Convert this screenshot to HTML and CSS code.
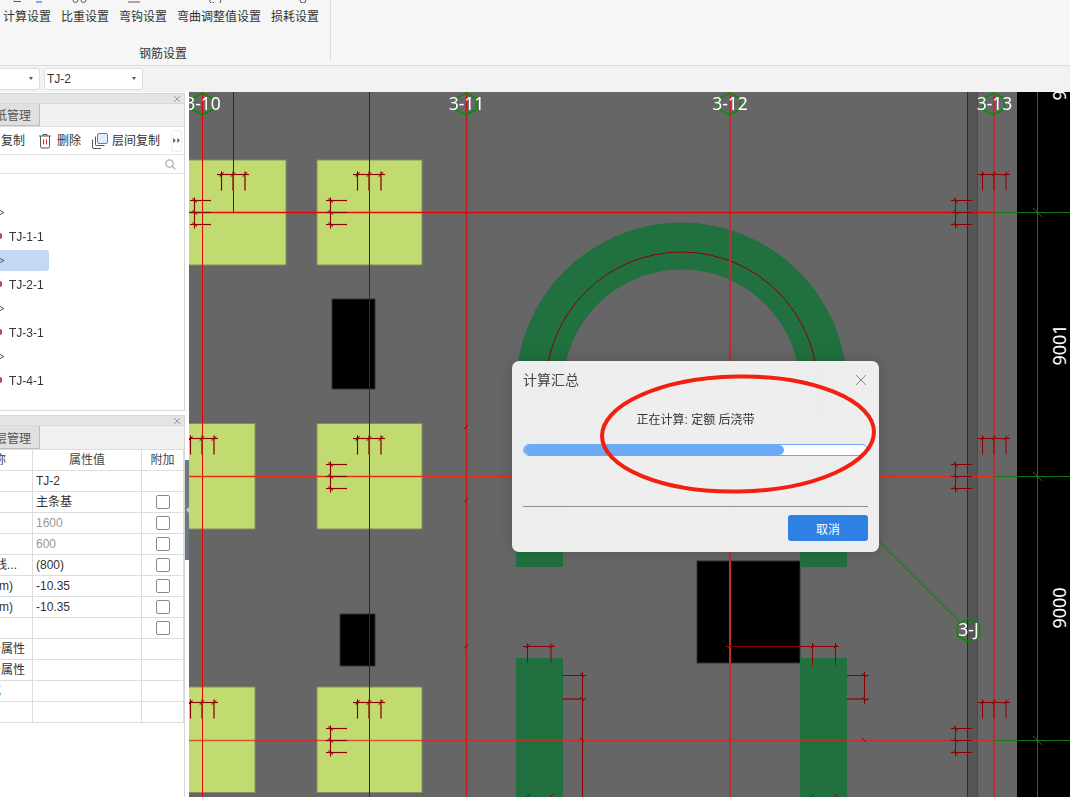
FILE: index.html
```html
<!DOCTYPE html>
<html lang="zh-CN">
<head>
<meta charset="utf-8">
<title>计算汇总</title>
<link rel="stylesheet" href="styles.css">
</head>
<body>
<div class="app">
  <header class="ribbon">
    <section class="ribbon-group">
      <div class="ribbon-items">
        <div class="ribbon-item"><svg class="ribbon-icon" viewBox="0 0 48 3"><path class="ic-dark" d="M11 .5v1h7"/><path class="ic-blue" d="M33 2h6"/></svg><span>计算设置</span></div>
        <div class="ribbon-item"><svg class="ribbon-icon" viewBox="0 0 48 3"><path class="ic-dark" d="M12 0a2.5 2.5 0 0 0 5 0M20 0a2.5 2.5 0 0 0 5 0"/></svg><span>比重设置</span></div>
        <div class="ribbon-item"><svg class="ribbon-icon" viewBox="0 0 48 3"><path class="ic-dark" d="M9 2h12"/></svg><span>弯钩设置</span></div>
        <div class="ribbon-item wide"><svg class="ribbon-icon wide" viewBox="0 0 84 3"><path class="ic-dark" d="M33 0a2 2 0 0 0 4 2M44 0l-1 3"/></svg><span>弯曲调整值设置</span></div>
        <div class="ribbon-item"><svg class="ribbon-icon" viewBox="0 0 48 3"><circle class="ic-dark" cx="32" cy="0" r="3"/></svg><span>损耗设置</span></div>
      </div>
      <div class="ribbon-title">钢筋设置</div>
    </section>
  </header>

  <div class="toolbar">
    <div class="select first"><span class="caret"></span></div>
    <div class="select second"><span>TJ-2</span><span class="caret"></span></div>
  </div>

  <main class="workspace">
    <aside class="sidebar">
      <div class="panels">
        <section class="panel tree-panel">
          <div class="panel-head"><svg class="close-icon" viewBox="0 0 8 8"><path d="M1 1l6 6M7 1L1 7"/></svg></div>
          <div class="tabs"><div class="tab"><span>图纸管理</span></div></div>
          <div class="actions">
            <span class="action copy-label">复制</span>
            <svg class="icon trash" viewBox="0 0 14 16"><path class="ic-dark" d="M1 3h12M5 3V1.5h4V3M2.5 3v10.5a1.5 1.5 0 0 0 1.5 1.5h6a1.500 1.500 0 0 0 1.500-1.500V3"/><path class="ic-red" d="M5.500 6.500v5M8.500 6.500v5"/></svg>
            <span class="action delete-label">删除</span>
            <svg class="icon layers" viewBox="0 0 16 16"><rect class="ic-blue-box" x="5.500" y=".5" width="10" height="10" rx="1.500"/><path class="ic-dark" d="M3.500 3.500v8a1 1 0 0 0 1 1h8M.5 6.500v7.500a1.500 1.500 0 0 0 1.500 1.500h7"/></svg>
            <span class="action floor-label">层间复制</span>
            <button class="more" type="button"><svg viewBox="0 0 8 6"><path d="M0 0l3 3-3 3zM5 0l3 3-3 3z"/></svg></button>
          </div>
          <div class="search"><svg class="search-icon" viewBox="0 0 11 11"><circle cx="4.500" cy="4.500" r="3.700"/><path d="M7.300 7.300L10.300 10.300"/></svg></div>
          <ul class="tree">
            <li class="tree-row"><svg class="chevron" viewBox="0 0 5 5"><path d="M0 .5l4 2-4 2"/></svg></li>
            <li class="tree-row"><span class="leaf-dot"></span><span class="leaf-text">TJ-1-1</span></li>
            <li class="tree-row selected"><svg class="chevron" viewBox="0 0 5 5"><path d="M0 .5l4 2-4 2"/></svg></li>
            <li class="tree-row"><span class="leaf-dot"></span><span class="leaf-text">TJ-2-1</span></li>
            <li class="tree-row"><svg class="chevron" viewBox="0 0 5 5"><path d="M0 .5l4 2-4 2"/></svg></li>
            <li class="tree-row"><span class="leaf-dot"></span><span class="leaf-text">TJ-3-1</span></li>
            <li class="tree-row"><svg class="chevron" viewBox="0 0 5 5"><path d="M0 .5l4 2-4 2"/></svg></li>
            <li class="tree-row"><span class="leaf-dot"></span><span class="leaf-text">TJ-4-1</span></li>
          </ul>
        </section>

        <section class="panel props-panel">
          <div class="panel-head"><svg class="close-icon" viewBox="0 0 8 8"><path d="M1 1l6 6M7 1L1 7"/></svg></div>
          <div class="tabs"><div class="tab"><span>分层管理</span></div></div>
          <div class="props">
            <div class="cell name head end-6"><span>名称</span></div><div class="cell head center">属性值</div><div class="cell head center">附加</div>
            <div class="cell name"></div><div class="cell">TJ-2</div><div class="cell"></div>
            <div class="cell name"></div><div class="cell">主条基</div><div class="cell check"><span class="checkbox"></span></div>
            <div class="cell name"></div><div class="cell muted">1600</div><div class="cell check"><span class="checkbox"></span></div>
            <div class="cell name"></div><div class="cell muted">600</div><div class="cell check"><span class="checkbox"></span></div>
            <div class="cell name end-17"><span>轴线距左边线...</span></div><div class="cell">(800)</div><div class="cell check"><span class="checkbox"></span></div>
            <div class="cell name end-13"><span>底标高(m)</span></div><div class="cell">-10.35</div><div class="cell check"><span class="checkbox"></span></div>
            <div class="cell name end-13"><span>顶标高(m)</span></div><div class="cell">-10.35</div><div class="cell check"><span class="checkbox"></span></div>
            <div class="cell name"></div><div class="cell"></div><div class="cell check"><span class="checkbox"></span></div>
            <div class="cell name end-25"><span>钢筋业务属性</span></div><div class="cell"></div><div class="cell"></div>
            <div class="cell name end-25"><span>土建业务属性</span></div><div class="cell"></div><div class="cell"></div>
            <div class="cell name end-1 link"><span>显示样式</span></div><div class="cell"></div><div class="cell"></div>
            <div class="cell name"></div><div class="cell"></div><div class="cell"></div>
          </div>
        </section>
      </div>
      <div class="splitter">
        <div class="splitter-handle"><span class="splitter-arrow"></span></div>
      </div>
    </aside>

    <div class="canvas">
      <svg class="drawing" viewBox="189 92 881 705" xmlns="http://www.w3.org/2000/svg">
        <defs>
          <g id="mark-top">
            <path d="M0 0H32M4.500 -3V16M16 -3V16M28 -3V16"/>
            <path d="M2.500 2L6.500 -2M14 2L18 -2M26 2L30 -2"/>
          </g>
          <g id="mark-top-two">
            <path d="M0 0H32M4.500 -3V16M28 -3V16"/>
            <path d="M2.500 2L6.500 -2M26 2L30 -2"/>
          </g>
          <g id="mark-left">
            <path d="M4.500 -15V16M0 -12H21M0 0H21M0 12H21"/>
            <path d="M2.500 -14L7 -10M2.500 -2L7 2M2.500 10L7 14"/>
          </g>
          <path id="tick" d="M-2 2L2 -2"/>
          <path id="tick-back" d="M-2 -2L2 2"/>
        </defs>

        <rect class="bg" x="189" y="92" width="881" height="705"/>
        <rect class="band" x="968" y="92" width="9" height="705"/>
        <rect class="void" x="1017" y="92" width="53" height="705"/>

        <rect class="pad" x="180" y="160" width="106" height="105"/>
        <rect class="pad" x="317" y="160" width="105" height="105"/>
        <rect class="pad" x="150" y="423.500" width="105" height="105.500"/>
        <rect class="pad" x="317" y="423.500" width="105" height="105.500"/>
        <rect class="pad" x="150" y="687" width="105" height="105.500"/>
        <rect class="pad" x="317" y="687" width="105" height="105.500"/>

        <rect class="block" x="332" y="299" width="43" height="90"/>
        <rect class="block" x="340" y="614" width="35" height="52"/>
        <rect class="block" x="697" y="561" width="103" height="102"/>

        <path class="arch" d="M516 567V388A165.500 165.500 0 0 1 847 388V567H800V388A118.500 118.500 0 0 0 563 388V567Z"/>
        <path class="arch-bar" d="M545.700 388A136 136 0 0 1 817.700 388V420"/>
        <rect class="arch-leg" x="516" y="658" width="47" height="139"/>
        <rect class="arch-leg" x="800" y="658" width="47" height="139"/>

        <path class="ln-dark" d="M369.500 92V797M233.500 92V212M967.500 92V797"/>
        <path class="ln-faded" d="M977.500 92V797"/>
        <path class="ln-bright" d="M202.500 92V797"/>
        <path class="ln-mid" d="M466.500 92V797"/>
        <path class="ln-wide" d="M730 92V797M994 92V797"/>
        <path class="ln-h-bright" d="M189 212.500H994"/>
        <path class="ln-warm" d="M189 476.500H994"/>
        <path class="ln-soft" d="M189 740.500H994"/>

        <path class="ln-green" d="M994 212.500H1070M994 476.500H1070M994 740.500H1070M1037.500 92V797M872 534L959 621"/>
        <path class="ln-green" d="M1033 208L1042 217M1033 472L1042 481M1033 736L1042 745"/>

        <g class="halo">
          <use href="#mark-top" x="217" y="174.500"/><use href="#mark-top" x="353" y="174.500"/>
          <use href="#mark-top" x="186" y="438.500"/><use href="#mark-top" x="353" y="438.500"/>
          <use href="#mark-top" x="186" y="702.500"/><use href="#mark-top" x="353" y="702.500"/>
          <use href="#mark-left" x="190" y="212.500"/><use href="#mark-left" x="326" y="212.500"/>
          <use href="#mark-left" x="326" y="476.500"/><use href="#mark-left" x="326" y="740.500"/>
        </g>
        <g class="rebar">
          <use href="#mark-top" x="217" y="174.500"/><use href="#mark-top" x="353" y="174.500"/>
          <use href="#mark-top" x="186" y="438.500"/><use href="#mark-top" x="353" y="438.500"/>
          <use href="#mark-top" x="186" y="702.500"/><use href="#mark-top" x="353" y="702.500"/>
          <use href="#mark-left" x="190" y="212.500"/><use href="#mark-left" x="326" y="212.500"/>
          <use href="#mark-left" x="326" y="476.500"/><use href="#mark-left" x="326" y="740.500"/>
          <use href="#mark-top" x="978" y="174.500"/><use href="#mark-top" x="978" y="438.500"/><use href="#mark-top" x="978" y="702.500"/>
          <use href="#mark-left" x="951" y="212.500"/><use href="#mark-left" x="951" y="476.500"/><use href="#mark-left" x="951" y="740.500"/>
          <use href="#mark-top-two" x="523" y="646.500"/>
          <path d="M725 646.500H839M812.500 643V665M835.500 643V665M562 675.500H586M847 675.500H869M582.500 672V797M864.500 672V704"/>
          <path class="bar-thick" d="M562 699H586M847 699H869"/>
          <use href="#tick-back" x="582" y="675"/><use href="#tick-back" x="582" y="699"/><use href="#tick-back" x="582" y="740"/>
          <use href="#tick-back" x="864" y="675"/><use href="#tick-back" x="864" y="699"/><use href="#tick-back" x="864" y="740"/>
          <use href="#tick" x="466" y="427"/><use href="#tick" x="466" y="500.500"/><use href="#tick" x="466" y="646.500"/>
          <use href="#tick" x="729.500" y="646.500"/><use href="#tick" x="812.500" y="646.500"/><use href="#tick" x="835.500" y="646.500"/>
          <use href="#tick" x="528" y="796"/><use href="#tick" x="551" y="796"/><use href="#tick" x="812" y="796"/><use href="#tick" x="835" y="796"/>
        </g>

        <g class="hexes">
          <path d="M202.500 93L213 98.500V109.500L202.500 115L192 109.500V98.500Z"/>
          <path d="M466 93L476.500 98.500V109.500L466 115L455.500 109.500V98.500Z"/>
          <path d="M729.500 93L740 98.500V109.500L729.500 115L719 109.500V98.500Z"/>
          <path d="M993.500 93L1004 98.500V109.500L993.500 115L983 109.500V98.500Z"/>
          <path d="M968.500 618.500L979.500 624.500V636L968.500 642L957.500 636V624.500Z"/>
        </g>
        <g class="axis">
          <text x="203" y="110">3-10</text>
          <text x="466.500" y="110">3-11</text>
          <text x="730" y="110">3-12</text>
          <text x="994.500" y="110">3-13</text>
          <text x="968.500" y="636">3-J</text>
        </g>
        <g class="dim">
          <text transform="translate(1066 80) rotate(-90)">9000</text>
          <text transform="translate(1066 345) rotate(-90)">9001</text>
          <text transform="translate(1066 608) rotate(-90)">9000</text>
        </g>
      </svg>
    </div>
  </main>

  <div class="dialog" role="dialog">
    <div class="dialog-head">
      <span class="dialog-title">计算汇总</span>
      <svg class="dialog-close" viewBox="0 0 12 12"><path d="M1 1l10 10M11 1L1 11"/></svg>
    </div>
    <div class="dialog-status">正在计算: 定额 后浇带</div>
    <div class="progress"><div class="progress-fill" style="width:75.700%"></div></div>
    <div class="dialog-foot"><button class="cancel" type="button">取消</button></div>
  </div>

  <svg class="annotation" viewBox="0 0 282 126"><ellipse cx="141" cy="63" rx="136" ry="57.500" transform="rotate(-1 141 63)"/></svg>
</div>
</body>
</html>
```

FILE: styles.css
```css
* { box-sizing: border-box; }
html, body { margin: 0; padding: 0; height: 100%; }
body {
  font-family: "Liberation Sans", "Noto Sans CJK SC", sans-serif;
  font-size: 12px;
  color: #333;
  overflow: hidden;
  background: #fff;
}
.app {
  position: relative;
  width: 1070px;
  height: 797px;
  display: flex;
  flex-direction: column;
  overflow: hidden;
}

/* ribbon */
.ribbon {
  height: 66px;
  flex: none;
  background: #f6f6f6;
  border-bottom: 1px solid #dcdcdc;
  display: flex;
}
.ribbon-group {
  width: 331px;
  height: 61px;
  border-right: 1px solid #dcdcdc;
  display: flex;
  flex-direction: column;
}
.ribbon-items { display: flex; gap: 10px; padding-left: 3px; height: 47px; flex: none; }
.ribbon-item { width: 48px; display: flex; flex-direction: column; line-height: 16px; white-space: nowrap; }
.ribbon-item.wide { width: 84px; }
.ribbon-icon { display: block; width: 48px; height: 3px; margin-bottom: 6px; }
.ribbon-icon.wide { width: 84px; }
.ic-dark { fill: none; stroke: #555; stroke-width: 1; }
.ic-blue { fill: none; stroke: #4a90e2; stroke-width: 1.500; }
.ic-red { fill: none; stroke: #e02020; stroke-width: 1; }
.ic-blue-box { fill: #e3eefb; stroke: #4a86d8; stroke-width: 1; }
.ribbon-title { text-align: center; line-height: 14px; padding-right: 4px; }

/* selects */
.toolbar {
  height: 26px;
  flex: none;
  background: #f2f2f2;
  display: flex;
  align-items: center;
  gap: 4px;
  padding-bottom: 1px;
}
.select {
  height: 22px;
  background: #fff;
  border: 1px solid #ddd;
  border-radius: 3px;
  display: flex;
  align-items: center;
  justify-content: space-between;
  padding: 0 6px 0 2px;
  line-height: 16px;
}
.select.first { width: 40px; justify-content: flex-end; border-left: 0; border-radius: 0 3px 3px 0; }
.select.second { width: 99px; }
.caret {
  width: 0; height: 0;
  border-left: 2.500px solid transparent;
  border-right: 2.500px solid transparent;
  border-top: 3px solid #555;
}

/* sidebar */
.workspace { flex: 1; display: flex; min-height: 0; }
.sidebar { width: 189px; flex: none; display: flex; background: #fff; }
.panels { width: 185px; display: flex; flex-direction: column; gap: 4px; padding-top: 1px; }
.panel { border-right: 1px solid #d6d6d6; background: #fff; }
.tree-panel { height: 318px; border-bottom: 1px solid #d6d6d6; }
.props-panel { flex: 1; }
.panel-head {
  height: 11px;
  background: #e4e4e4;
  border-top: 1px solid #d8d8d8;
  border-bottom: 1px solid #d8d8d8;
  display: flex;
  justify-content: flex-end;
  align-items: center;
  padding-right: 3px;
}
.close-icon { width: 8px; height: 8px; }
.close-icon path { stroke: #999; stroke-width: 1; fill: none; }
.tabs { height: 23px; background: #f0f0f0; border-bottom: 1px solid #ddd; display: flex; }
.props-panel .tabs { height: 24px; }
.tab {
  width: 40px;
  background: #e0e0e0;
  border-right: 1px solid #bdbdbd;
  border-bottom: 1px solid #bdbdbd;
  display: flex;
  justify-content: flex-end;
  align-items: center;
  overflow: hidden;
  white-space: nowrap;
  padding-right: 8px;
  color: #555;
  flex: none;
}
.actions { height: 28px; display: flex; align-items: center; border-bottom: 1px solid #e2e2e2; position: relative; }
.action { line-height: 16px; white-space: nowrap; padding-top: 1px; }
.copy-label { margin-left: 1px; }
.icon { display: block; flex: none; }
.trash { width: 14px; height: 16px; margin-left: 13px; }
.delete-label { margin-left: 5px; }
.layers { width: 16px; height: 16px; margin-left: 11px; }
.floor-label { margin-left: 4px; }
.more {
  width: 11px; height: 22px;
  margin-left: 11px; padding: 0;
  border: 1px solid #eee; border-radius: 3px;
  background: #fff;
  display: flex; align-items: center; justify-content: center;
}
.more svg { width: 7px; height: 5px; }
.more path { fill: #555; }
.search { height: 19px; border-bottom: 1px solid #e2e2e2; display: flex; justify-content: flex-end; align-items: center; padding-right: 8px; }
.search-icon { width: 11px; height: 11px; }
.search-icon circle, .search-icon path { fill: none; stroke: #aaa; stroke-width: 1.200; }
.tree { list-style: none; margin: 0; padding: 26px 0 0; }
.tree-row { height: 24px; display: flex; align-items: center; position: relative; }
.tree-row.selected::before {
  content: "";
  position: absolute;
  left: 0; top: 2px;
  width: 49px; height: 21px;
  background: #c3d9f1;
  border-radius: 0 3px 3px 0;
}
.chevron { width: 5px; height: 5px; position: relative; }
.chevron path { fill: none; stroke: #555; stroke-width: 1; }
.leaf-dot { width: 2px; height: 6px; background: #b5486a; border-radius: 0 2px 2px 0; }
.leaf-text { margin-left: 7px; padding-top: 2px; }

/* property grid */
.props { display: grid; grid-template-columns: 33px 109px 42px; grid-auto-rows: 21px; }
.cell {
  border-right: 1px solid #ddd;
  border-bottom: 1px solid #ddd;
  display: flex;
  align-items: center;
  padding-left: 3px;
  white-space: nowrap;
  overflow: hidden;
  line-height: 16px;
}
.cell.center { justify-content: center; padding: 0; }
.cell.head { color: #444; }
.cell.name { padding: 0; justify-content: flex-end; }
.cell.end-6 { padding-right: 26px; }
.cell.end-17 { padding-right: 15px; }
.cell.end-13 { padding-right: 19px; }
.cell.end-25 { padding-right: 7px; }
.cell.end-1 { padding-right: 31px; }
.cell.link { color: #2f7ed8; }
.cell.muted { color: #999; }
.cell.check { justify-content: center; padding: 0; }
.checkbox { width: 14px; height: 14px; border: 1px solid #8a8a8a; border-radius: 2px; background: #fff; }

.splitter { width: 4px; display: flex; flex-direction: column; padding-top: 368px; }
.splitter-handle { height: 100px; background: #6f7784; display: flex; align-items: center; justify-content: center; }
.splitter-arrow {
  width: 0; height: 0;
  border-top: 3.500px solid transparent;
  border-bottom: 3.500px solid transparent;
  border-right: 3px solid #c9ced6;
}

/* drawing */
.canvas { flex: 1; min-width: 0; overflow: hidden; background: #666; }
.drawing { display: block; width: 881px; height: 705px; }
.bg { fill: #666; }
.band { fill: #555; }
.void { fill: #000; }
.pad { fill: #c2db70; stroke: #7f9160; stroke-width: 1; }
.block { fill: #000; stroke: #333; stroke-width: 1; }
.arch { fill: #21703f; }
.arch-leg { fill: #21703f; }
.arch-bar { fill: none; stroke: #8b0000; stroke-width: 1; }
.ln-dark { fill: none; stroke: #960000; stroke-width: 1; }
.ln-faded { fill: none; stroke: #a02828; stroke-width: 1; }
.ln-bright { fill: none; stroke: #f00000; stroke-width: 1; }
.ln-h-bright { fill: none; stroke: #f00000; stroke-width: 1.300; }
.ln-mid { fill: none; stroke: #c41818; stroke-width: 1.300; }
.ln-wide { fill: none; stroke: #b83030; stroke-width: 2; }
.ln-warm { fill: none; stroke: #f02a14; stroke-width: 1.300; }
.ln-soft { fill: none; stroke: #e82020; stroke-width: 1.300; opacity: .75; }
.ln-green { fill: none; stroke: #137a13; stroke-width: 1; }
.halo { fill: none; stroke: #a5743a; stroke-width: 1.500; opacity: .7; }
.rebar { fill: none; stroke: #8b0000; stroke-width: 1; }
.bar-thick { stroke: #7d2a2a; stroke-width: 2; }
.hexes { fill: none; stroke: #009000; stroke-width: 1.500; }
.axis text { fill: #fff; font: 17.500px "Noto Sans", sans-serif; text-anchor: middle; }
.dim text { fill: #fff; font: 18px "Noto Sans", sans-serif; text-anchor: middle; }

/* dialog */
.dialog {
  position: absolute;
  left: 512px; top: 361px;
  width: 367px; height: 191px;
  padding: 0 11px;
  background: rgba(240, 241, 240, .98);
  border-radius: 7px;
  box-shadow: 0 0 18px rgba(0, 0, 0, .18);
  display: flex;
  flex-direction: column;
}
.dialog-head { height: 38px; display: flex; align-items: center; justify-content: space-between; flex: none; }
.dialog-title { font-size: 14px; color: #444; line-height: 18px; }
.dialog-close { width: 12px; height: 12px; margin-right: 1px; }
.dialog-close path { stroke: #888; stroke-width: 1; fill: none; }
.dialog-status { text-align: center; line-height: 16px; margin-top: 13px; height: 32px; color: #333; padding-right: 0; }
.progress { height: 12px; border: 1px solid #6caaf5; border-radius: 6px; background: #fff; overflow: hidden; flex: none; }
.progress-fill { height: 100%; background: #6caaf5; border-radius: 5px; }
.dialog-foot { margin-top: 50px; border-top: 1px solid #8c8c8c; padding-top: 8px; display: flex; justify-content: flex-end; }
.cancel {
  width: 80px; height: 26px;
  border: 0; border-radius: 3px; padding: 0;
  background: #2f80e4; color: #fff;
  font: inherit;
}

/* hand-drawn red ring */
.annotation { position: absolute; left: 597px; top: 371px; width: 282px; height: 126px; overflow: visible; }
.annotation ellipse { fill: none; stroke: #f41f10; stroke-width: 4; }
```
